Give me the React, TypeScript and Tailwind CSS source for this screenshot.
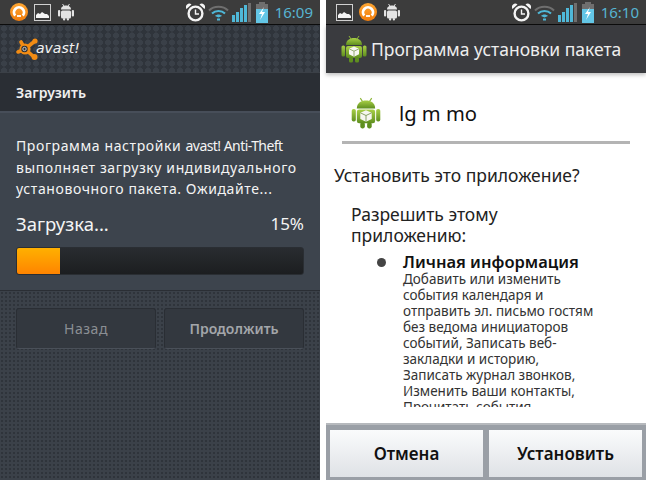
const font = { fontFamily: '"Noto Sans", "DejaVu Sans", sans-serif' };

function AvastRing() {
  return (
    <svg width="18" height="18" viewBox="0 0 18 18">
      <defs>
        <linearGradient id="ring" x1="0" y1="0" x2="0" y2="1">
          <stop offset="0" stopColor="#ffa733" />
          <stop offset="1" stopColor="#f07c0c" />
        </linearGradient>
      </defs>
      <circle cx="9" cy="9" r="9" fill="url(#ring)" />
      <path d="M5.2 12.6 A5 5 0 1 1 12.8 12.6" fill="none" stroke="#fff" strokeWidth="2.8" />
      <path d="M7 13h4" stroke="#fff" strokeWidth="1.8" />
    </svg>
  );
}

function PictureIcon() {
  return (
    <svg width="17" height="17" viewBox="0 0 17 17">
      <rect x="0.5" y="0.5" width="16" height="16" fill="#3a3a3a" stroke="#d0d0d0" />
      <path d="M2 14V11l2-2 2 1 2-2 3 2 2 0 2 2v2z" fill="#f4f4f4" />
    </svg>
  );
}

function DroidSmall() {
  return (
    <svg width="18" height="18" viewBox="0 0 18 18" fill="#e4e4e4">
      <path d="M5.5 1l1.5 2M12.5 1L11 3" stroke="#e4e4e4" />
      <path d="M4 6.5C4 3.5 6.5 2.5 9 2.5s5 1 5 4z" />
      <rect x="4" y="7.5" width="10" height="8" rx="1.5" />
      <rect x="1" y="7" width="2.2" height="6.5" rx="1" />
      <rect x="14.8" y="7" width="2.2" height="6.5" rx="1" />
      <rect x="6" y="15" width="2.2" height="2.6" rx="1" />
      <rect x="9.8" y="15" width="2.2" height="2.6" rx="1" />
    </svg>
  );
}

function Alarm() {
  return (
    <svg width="19" height="19" viewBox="0 0 19 19" fill="none">
      <circle cx="9.5" cy="10.5" r="6.9" stroke="#f4f4f4" strokeWidth="2.4" />
      <path d="M9.5 6.5v4.5H13" stroke="#f4f4f4" strokeWidth="1.4" />
      <path d="M0.5 6A3.4 3.4 0 0 1 5.5 1.5zM18.5 6A3.4 3.4 0 0 0 13.5 1.5z" fill="#f4f4f4" />
    </svg>
  );
}

function Wifi() {
  return (
    <svg width="21" height="17" viewBox="0 0 21 17" fill="none">
      <path d="M1 6.5C6 1.5 15 1.5 20 6.5" stroke="#6f6f6f" strokeWidth="2" />
      <path d="M4 9.5C7.5 6 13.5 6 17 9.5" stroke="#4fb8d8" strokeWidth="2" />
      <path d="M7 12C9 10 12 10 14 12L10.5 13.5z" fill="#4fb8d8" />
      <rect x="9" y="14.5" width="3" height="2" fill="#4fb8d8" />
    </svg>
  );
}

function Signal() {
  const bars = [
    { h: "h-[7px]", c: "bg-[#4fb8d8]" },
    { h: "h-[10px]", c: "bg-[#4fb8d8]" },
    { h: "h-[14px]", c: "bg-[#4fb8d8]" },
    { h: "h-[17px]", c: "bg-[#4fb8d8]" },
    { h: "h-[19px]", c: "bg-[#6f6f6f]" },
  ];
  return (
    <div className="flex items-end gap-[1px] h-[19px]">
      {bars.map((b, i) => (
        <div key={i} className={`w-[3px] ${b.h} ${b.c}`} />
      ))}
    </div>
  );
}

function Battery() {
  return (
    <svg width="12" height="21" viewBox="0 0 12 21">
      <rect x="3" y="0" width="6" height="2" fill="#6f6f6f" />
      <rect x="0" y="2" width="12" height="5" fill="#6f6f6f" />
      <rect x="0" y="7" width="12" height="14" fill="#63c6e6" />
      <path d="M8 5L3 12h3l-2 6 5-8H6z" fill="#fff" />
    </svg>
  );
}

function StatusBar({ time, left }: { time: string; left: React.ReactNode }) {
  return (
    <div className="h-[25px] shrink-0 flex items-center bg-[#3c3c3c] border-b border-[#0c0c0c] pl-[10px] pr-[7px]">
      <div className="flex items-center gap-[6px]">{left}</div>
      <div className="ml-auto flex items-center">
        <Alarm />
        <div className="w-[3px]" />
        <Wifi />
        <div className="w-[3px]" />
        <Signal />
        <div className="w-[5px]" />
        <Battery />
        <span className="ml-[7px] text-[15px] leading-none text-[#57b4d2]">{time}</span>
      </div>
    </div>
  );
}

function AndroidBox({ size, id }: { size: number; id: string }) {
  return (
    <svg width={size} height={size} viewBox="0 0 26 28">
      <defs>
        <linearGradient id={id} x1="0" y1="0" x2="0" y2="1">
          <stop offset="0" stopColor="#a8cf45" />
          <stop offset="1" stopColor="#5f8f1f" />
        </linearGradient>
      </defs>
      <path d="M8 1l2 3M18 1l-2 3" stroke="#8cb53a" strokeWidth="1" />
      <path d="M5 10C5 5 9 3 13 3s8 2 8 7z" fill={`url(#${id})`} />
      <rect x="5" y="11" width="16" height="12" rx="2" fill={`url(#${id})`} />
      <rect x="0.5" y="10.5" width="3.6" height="11" rx="1.6" fill={`url(#${id})`} />
      <rect x="21.9" y="10.5" width="3.6" height="11" rx="1.6" fill={`url(#${id})`} />
      <rect x="8" y="22" width="4" height="5.5" rx="1.6" fill="#5f8f1f" />
      <rect x="14" y="22" width="4" height="5.5" rx="1.6" fill="#5f8f1f" />
      <path d="M13 11.5l5 2.3v5.4l-5 2.5-5-2.5v-5.4z" fill="#f6f6f0" />
      <path d="M8 13.8l5 2.4 5-2.4M13 16.2v5.5" stroke="#7d9a55" strokeWidth="0.8" fill="none" />
    </svg>
  );
}

function AvastLogo() {
  return (
    <div className="flex items-center">
      <svg width="24" height="24" viewBox="0 0 24 24">
        <g stroke="#f28c14" strokeWidth="3.6" strokeLinecap="round">
          <path d="M10 12L6 5M10 12L20 4M10 12L19 20M10 12L3 15" />
        </g>
        <circle cx="10" cy="12" r="5.5" fill="#f28c14" />
        <circle cx="19.5" cy="20" r="3" fill="#f28c14" />
        <circle cx="20" cy="4" r="2.6" fill="#f28c14" />
        <circle cx="9.5" cy="12" r="3.2" fill="#2c3036" />
        <circle cx="9.5" cy="12" r="1.7" fill="none" stroke="#ddd" strokeWidth="0.9" />
      </svg>
      <span
        className="-ml-[3px] -mt-[1px] text-[14px] leading-none italic text-[#f0f0f0]"
        style={{ fontFamily: '"DejaVu Sans", sans-serif' }}
      >
        avast!
      </span>
    </div>
  );
}

export default function App() {
  return (
    <div className="flex w-[646px] h-[480px] bg-white overflow-hidden" style={font}>
      {/* avast screen */}
      <div className="w-[320px] shrink-0 flex flex-col bg-[#343a42]">
        <StatusBar
          time="16:09"
          left={
            <>
              <AvastRing />
              <PictureIcon />
              <DroidSmall />
            </>
          }
        />
        <div className="h-[47px] shrink-0 flex items-center pl-[15px] bg-[#2f343b] bg-[radial-gradient(circle,#3a4048_55%,transparent_60%)] bg-[length:8px_7px]">
          <AvastLogo />
        </div>
        <div className="h-[41px] shrink-0 flex items-center pl-[16px] bg-[#2a2e34] border-t border-[#3b4047] border-b-2 border-b-[#474e59] text-[14px] font-semibold text-[#f0f0f0]">
          Загрузить
        </div>
        <div className="h-[178px] shrink-0 px-[16px] pt-[22px] bg-[#3d444d] border-b border-[#2a2e34]">
          <p className="text-[14px] leading-[21.5px] text-[#f4f4f4] whitespace-nowrap tracking-[0.6px]">
            Программа настройки <span className="tracking-[-0.55px]">avast! Anti-Theft</span>
            <br />
            выполняет загрузку индивидуального
            <br />
            установочного пакета. Ожидайте...
          </p>
          <div className="mt-[12px] flex justify-between text-[18.5px] leading-[24px] text-[#f4f4f4]">
            <span>Загрузка...</span>
            <span className="text-[17px]">15%</span>
          </div>
          <div className="mt-[11px] h-[28px] rounded-[3px] bg-gradient-to-b from-[#292c30] to-[#1c1e20] border border-[#2a2e33] overflow-hidden">
            <div className="w-[43px] h-full bg-gradient-to-b from-[#ffb000] to-[#ff8400]" />
          </div>
        </div>
        <div className="flex-1 flex gap-[8px] pl-[16px] pr-[16px] pt-[17px] bg-[#3b4149] bg-[radial-gradient(circle,#2f343b_35%,transparent_40%)] bg-[length:4px_4px]">
          <div className="w-[140px] h-[41px] flex items-center justify-center rounded-[3px] bg-[#33383f] border border-[#2a2e34] border-b-[#4a5059] text-[14px] tracking-[0.5px] text-[#8b8f94]">
            Назад
          </div>
          <div className="w-[140px] h-[41px] flex items-center justify-center rounded-[3px] bg-[#33383f] border border-[#2a2e34] border-b-[#4a5059] text-[14px] font-semibold text-[#a3a6aa]">
            Продолжить
          </div>
        </div>
      </div>

      <div className="w-[6px] shrink-0 bg-white" />

      {/* package installer */}
      <div className="w-[320px] shrink-0 flex flex-col bg-white">
        <StatusBar
          time="16:10"
          left={
            <>
              <PictureIcon />
              <AvastRing />
              <DroidSmall />
            </>
          }
        />
        <div className="h-[48px] shrink-0 flex items-center pl-[14px] bg-[#3a3b3f] shadow-[0_2px_4px_rgba(0,0,0,0.25)]">
          <AndroidBox size={28} id="droid-title" />
          <span className="ml-[3px] text-[17.5px] text-[#ededed]">Программа установки пакета</span>
        </div>
        <div className="flex items-center h-[68px] shrink-0 pl-[24px] pt-[12px]">
          <AndroidBox size={32} id="droid-app" />
          <span className="ml-[17px] text-[20.2px] text-[#111]">lg m mo</span>
        </div>
        <div className="mx-[16px] h-[3px] shrink-0 bg-[#b4b4b4]" />
        <p className="mt-[19px] pl-[8px] text-[17.5px] leading-[24px] text-[#222]">Установить это приложение?</p>
        <div className="mt-[13px] pt-[4px] pl-[25px] h-[207px] shrink-0 overflow-hidden">
          <p className="text-[17.5px] leading-[21px] text-[#222]">
            Разрешить этому
            <br />
            приложению:
          </p>
          <div className="flex mt-[6px]">
            <div className="w-[9px] h-[9px] mt-[6px] ml-[26px] rounded-full bg-[#444] shrink-0" />
            <div className="ml-[17px]">
              <div className="text-[16.5px] font-semibold leading-[19px] text-[#111]">Личная информация</div>
              <p className="text-[13.5px] leading-[16px] text-[#333] whitespace-nowrap">
                Добавить или изменить
                <br />
                события календаря и
                <br />
                отправить эл. письмо гостям
                <br />
                без ведома инициаторов
                <br />
                событий, Записать веб-
                <br />
                закладки и историю,
                <br />
                Записать журнал звонков,
                <br />
                Изменить ваши контакты,
                <br />
                Прочитать события
              </p>
            </div>
          </div>
        </div>
        <div className="mt-auto h-[57px] shrink-0 flex gap-[6px] px-[4px] pt-[5px] pb-[3px] bg-[#9a9fa6] border-t-2 border-[#b6b9bd]">
          <div className="flex-1 flex items-center justify-center bg-gradient-to-b from-[#fafbfc] to-[#dfe2e6] text-[17px] font-semibold text-[#111]">
            Отмена
          </div>
          <div className="flex-1 flex items-center justify-center bg-gradient-to-b from-[#fafbfc] to-[#dfe2e6] text-[17px] font-semibold text-[#111]">
            Установить
          </div>
        </div>
      </div>
    </div>
  );
}
